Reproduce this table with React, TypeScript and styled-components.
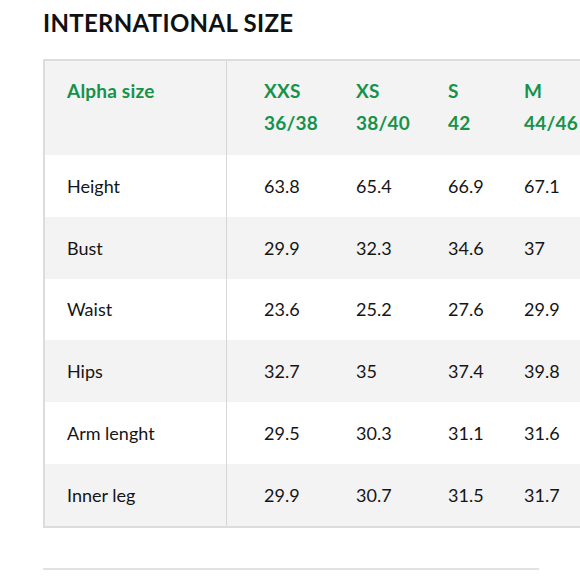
import React from "react";
import styled, { createGlobalStyle } from "styled-components";

const Global = createGlobalStyle`
  html, body { margin: 0; padding: 0; background: #fff; overflow: hidden; }
  body { font-family: "Lato", "Open Sans", sans-serif; }
`;

const Page = styled.div`
  width: 580px;
  height: 580px;
  overflow: hidden;
  padding: 9px 0 0 43px;
  box-sizing: border-box;
`;

const Title = styled.h1`
  margin: 0;
  font-size: 24px;
  font-weight: 700;
  color: #111;
  letter-spacing: 0.3px;
  line-height: 28px;
`;

const Table = styled.div`
  margin-top: 22px;
  width: 620px;
  border: 2px solid #dcdcdc;
  border-right: none;
  display: flex;
  flex-direction: column;
`;

const Row = styled.div<{ $shade: boolean; $head?: boolean }>`
  display: grid;
  grid-template-columns: 182px 92px 92px 76px 1fr;
  background: ${(p) => (p.$shade ? "#f3f3f3" : "#ffffff")};
  height: ${(p) => (p.$head ? "94px" : "61.8px")};
  & > div {
    justify-content: ${(p) => (p.$head ? "flex-start" : "center")};
    padding-top: ${(p) => (p.$head ? "14px" : "0")};
  }
`;

const Cell = styled.div<{ $first?: boolean; $green?: boolean }>`
  box-sizing: border-box;
  display: flex;
  flex-direction: column;
  align-items: flex-start;
  padding-left: ${(p) => (p.$first ? "22px" : "37px")};
  border-right: ${(p) => (p.$first ? "1px solid #d6d6d6" : "none")};
  font-size: ${(p) => (p.$green ? "19px" : "18px")};
  letter-spacing: ${(p) => (p.$green ? "0.2px" : "0")};
  line-height: 32px;
  color: ${(p) => (p.$green ? "#16924a" : "#151515")};
  font-weight: ${(p) => (p.$green ? 700 : 400)};
  white-space: nowrap;
`;

const FootLine = styled.div`
  margin-top: 40px;
  width: 496px;
  height: 2px;
  background: #e2e2e2;
`;

const sizes = [
  ["XXS", "36/38"],
  ["XS", "38/40"],
  ["S", "42"],
  ["M", "44/46"],
];

const rows: [string, string[]][] = [
  ["Height", ["63.8", "65.4", "66.9", "67.1"]],
  ["Bust", ["29.9", "32.3", "34.6", "37"]],
  ["Waist", ["23.6", "25.2", "27.6", "29.9"]],
  ["Hips", ["32.7", "35", "37.4", "39.8"]],
  ["Arm lenght", ["29.5", "30.3", "31.1", "31.6"]],
  ["Inner leg", ["29.9", "30.7", "31.5", "31.7"]],
];

export default function App() {
  return (
    <Page>
      <Global />
      <Title>INTERNATIONAL SIZE</Title>
      <Table>
        <Row $shade $head>
          <Cell $first $green>Alpha size</Cell>
          {sizes.map(([a, b]) => (
            <Cell key={a} $green>
              <span>{a}</span>
              <span>{b}</span>
            </Cell>
          ))}
        </Row>
        {rows.map(([label, vals], i) => (
          <Row key={label} $shade={i % 2 === 1}>
            <Cell $first>{label}</Cell>
            {vals.map((v, j) => (
              <Cell key={j}>{v}</Cell>
            ))}
          </Row>
        ))}
      </Table>
      <FootLine />
    </Page>
  );
}
